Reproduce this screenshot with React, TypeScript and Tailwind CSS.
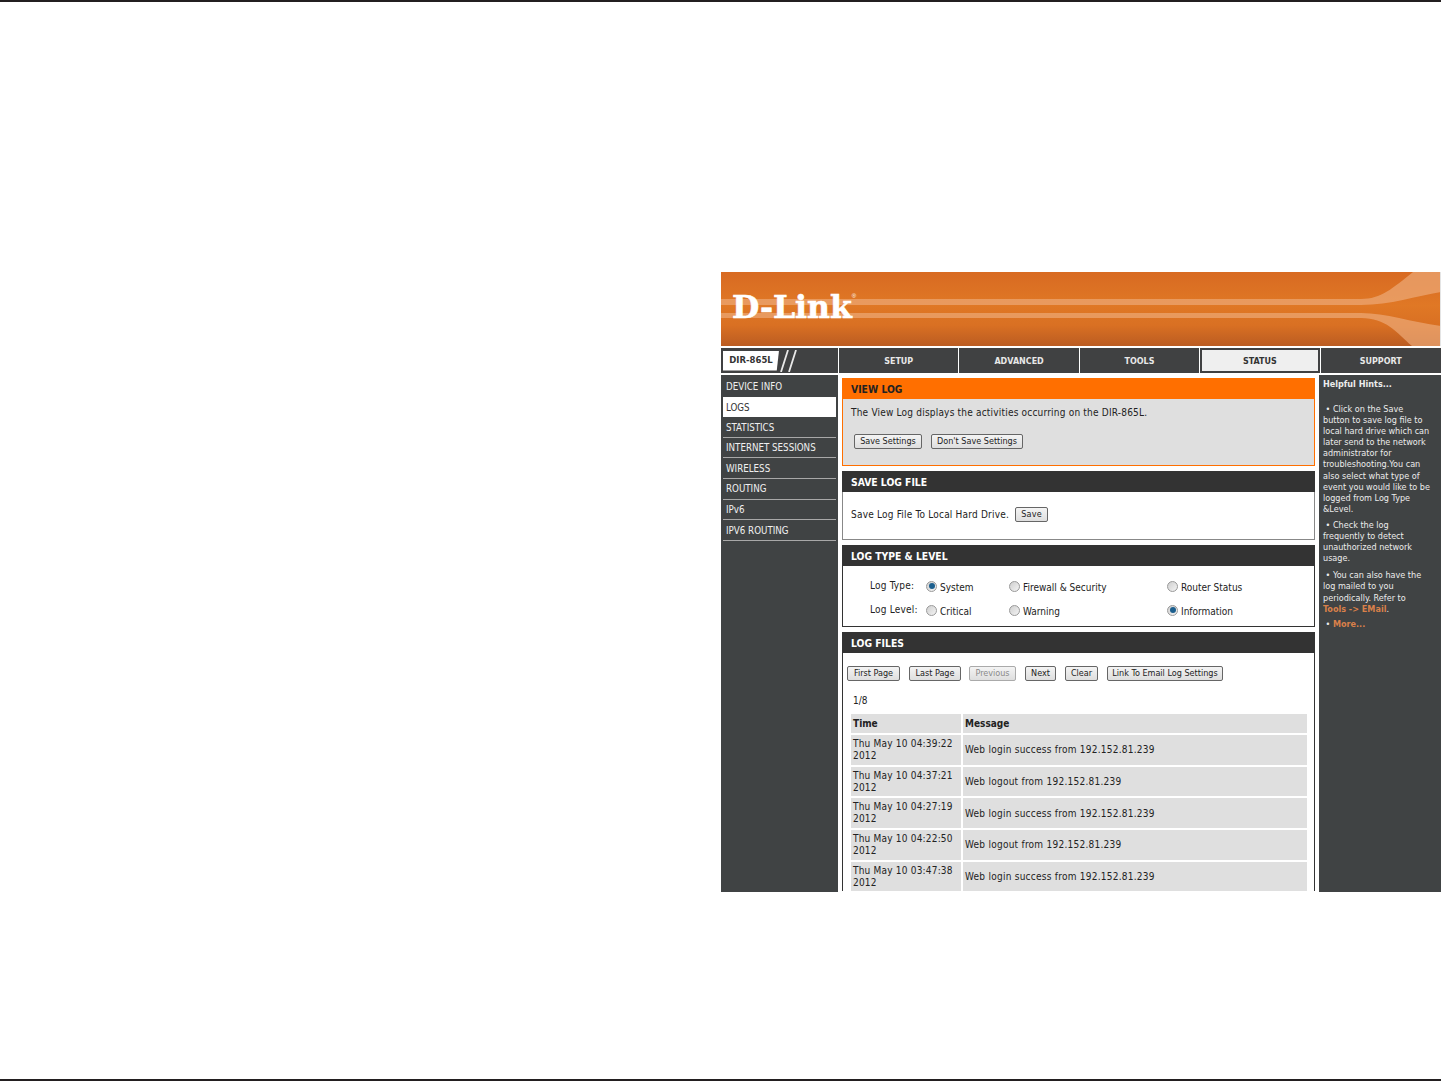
import React from "react";

const font = "[font-family:'DejaVu_Sans_Condensed','DejaVu_Sans',sans-serif]";

const tabs = ["SETUP", "ADVANCED", "TOOLS", "STATUS", "SUPPORT"];
const menu = ["DEVICE INFO", "LOGS", "STATISTICS", "INTERNET SESSIONS", "WIRELESS", "ROUTING", "IPv6", "IPV6 ROUTING"];
const logs = [
  ["Thu May 10 04:39:22 2012", "Web login success from 192.152.81.239"],
  ["Thu May 10 04:37:21 2012", "Web logout from 192.152.81.239"],
  ["Thu May 10 04:27:19 2012", "Web login success from 192.152.81.239"],
  ["Thu May 10 04:22:50 2012", "Web logout from 192.152.81.239"],
  ["Thu May 10 03:47:38 2012", "Web login success from 192.152.81.239"],
];

const Btn = ({ label, w, disabled }: { label: string; w: string; disabled?: boolean }) => (
  <span
    className={`inline-flex h-[15px] items-center justify-center rounded-[2px] border bg-gradient-to-b from-[#f4f4f4] to-[#dedede] text-[9px] leading-none ${w} ${
      disabled ? "border-[#aaaaaa] text-[#8a8a8a]" : "border-[#666666] text-[#222222]"
    }`}
  >
    {label}
  </span>
);

const Radio = ({ on }: { on?: boolean }) => (
  <span className="mb-[2px] flex h-[11px] w-[11px] items-center justify-center rounded-full border border-[#999999] bg-gradient-to-br from-[#cfcfcf] to-[#f4f4f4]">
    {on && <span className="h-[6px] w-[6px] rounded-full bg-[#1c5f8e]" />}
  </span>
);

const Head = ({ title, orange }: { title: string; orange?: boolean }) => (
  <div
    className={`flex h-[21px] items-center px-[9px] pt-[2px] text-[10.3px] font-bold ${
      orange ? "bg-[#ff6f00] text-[#222222]" : "bg-[#333333] text-white"
    }`}
  >
    {title}
  </div>
);

const Option = ({ label, on, w }: { label: string; on?: boolean; w: string }) => (
  <div className={`flex items-center gap-[3px] ${w}`}>
    <Radio on={on} />
    <span>{label}</span>
  </div>
);

const Banner = () => (
  <div className="relative h-[74px] overflow-hidden bg-[#d96d22]">
    <svg className="absolute inset-0" width="720" height="74" viewBox="0 0 720 74">
      <defs>
        <linearGradient id="body" x1="0" y1="0" x2="0" y2="1">
          <stop offset="0" stopColor="#d86a22" />
          <stop offset="0.45" stopColor="#e07825" />
          <stop offset="0.72" stopColor="#d97023" />
          <stop offset="1" stopColor="#bb5c22" />
        </linearGradient>
      </defs>
      <rect width="720" height="74" fill="url(#body)" />
      <path d="M0 27 H640 C660 27 672 16 692 0 H720 V20 C695 24 670 33 640 33 H0 Z" fill="#ecaa78" opacity="0.7" />
      <path d="M0 41 H640 C665 41 690 50 720 54 V74 H691 C675 60 665 46 640 46 H0 Z" fill="#ecaa78" opacity="0.7" />
      <path d="M719.5 0 V74" stroke="#e4e4e4" strokeWidth="1" />
    </svg>
    <div className="absolute left-[11px] top-[15px] flex items-start text-white">
      <span className="text-[31.5px] leading-[40px] font-bold [-webkit-text-stroke:0.6px_white] [font-family:'DejaVu_Serif',serif]">D-Link</span>
      <span className="mt-[6px] text-[6px] leading-none [font-family:'Liberation_Sans',sans-serif]">®</span>
    </div>
  </div>
);

export default function App() {
  return (
    <div className={`flex h-[1081px] w-[1441px] flex-col bg-white ${font}`}>
      <div className="h-[2px] bg-[#231f20]" />
      <div className="ml-[721px] mt-[270px] h-[620px] w-[720px] overflow-hidden">
        <Banner />
        <div className="mt-[2px] flex h-[25px] bg-white text-[8px] font-bold [font-family:'DejaVu_Sans',sans-serif]">
          <div className="flex w-[117px] items-center bg-[#404142] pl-[2px]">
            <div className="flex h-[20px] w-[56px] items-center justify-center bg-white text-[8.5px] text-[#333333] [clip-path:polygon(0_0,100%_0,96%_100%,0_100%)]">
              DIR-865L
            </div>
            <svg width="20" height="22" viewBox="0 0 20 22">
              <path d="M9 0 L2 22 M17 0 L10 22" stroke="#e8e8e8" strokeWidth="1.8" />
            </svg>
          </div>
          {tabs.map((t) => (
            <div
              key={t}
              className={`ml-[1px] flex items-center justify-center pt-[2px] ${t === "SUPPORT" ? "flex-1" : "w-[119.4px]"} ${
                t === "STATUS" ? "bg-[#efefef] text-[#333333] shadow-[inset_0_0_0_2px_#404142]" : "bg-[#404142] text-[#e8e8e8]"
              }`}
            >
              {t}
            </div>
          ))}
        </div>
        <div className="mt-[2px] flex h-[517px]">
          <div className="w-[117px] bg-[#404344] px-[2px] pt-[1px] text-[9.7px] text-[#f0f0f0]">
            {menu.map((m, i) => (
              <div
                key={m}
                className={`flex h-[20.6px] items-center pl-[3px] pt-[2px] ${
                  m === "LOGS" ? "bg-white text-[#333333]" : i > 1 ? "border-b border-[#a8a8a8]" : ""
                }`}
              >
                {m}
              </div>
            ))}
          </div>
          <div className="w-[481px] overflow-hidden px-[4px] pt-[3px] text-[10px] text-[#222222]">
            <Head title="VIEW LOG" orange />
            <div className="h-[67px] border border-t-0 border-[#ff6f00] bg-[#dfdfdf] pl-[8px] pt-[6px] tracking-[0.2px]">
              <div>The View Log displays the activities occurring on the DIR-865L.</div>
              <div className="mt-[14px] flex gap-[9px] pl-[3px] tracking-normal">
                <Btn label="Save Settings" w="w-[68px]" />
                <Btn label="Don't Save Settings" w="w-[92px]" />
              </div>
            </div>
            <div className="mt-[5px]">
              <Head title="SAVE LOG FILE" />
              <div className="flex h-[48px] items-center gap-[6px] border border-t-0 border-[#888888] pb-[2px] pl-[8px] tracking-[0.2px]">
                <span>Save Log File To Local Hard Drive.</span>
                <Btn label="Save" w="w-[33px]" />
              </div>
            </div>
            <div className="mt-[5px]">
              <Head title="LOG TYPE &amp; LEVEL" />
              <div className="flex h-[61px] flex-col gap-[10px] border border-t-0 border-[#333333] pl-[27px] pt-[14px]">
                <div className="flex h-[14px] items-center">
                  <span className="mb-[3px] w-[56px] tracking-[0.2px]">Log Type:</span>
                  <Option label="System" on w="w-[83px]" />
                  <Option label="Firewall & Security" w="w-[158px]" />
                  <Option label="Router Status" w="w-[100px]" />
                </div>
                <div className="flex h-[14px] items-center">
                  <span className="mb-[3px] w-[56px] tracking-[0.2px]">Log Level:</span>
                  <Option label="Critical" w="w-[83px]" />
                  <Option label="Warning" w="w-[158px]" />
                  <Option label="Information" on w="w-[100px]" />
                </div>
              </div>
            </div>
            <div className="mt-[5px]">
              <Head title="LOG FILES" />
              <div className="border-x border-[#333333] bg-white pt-[13px]">
                <div className="flex gap-[9px] pl-[4px]">
                  <Btn label="First Page" w="w-[53px]" />
                  <Btn label="Last Page" w="w-[52px]" />
                  <Btn label="Previous" w="-ml-[1px] w-[47px]" disabled />
                  <Btn label="Next" w="w-[31px]" />
                  <Btn label="Clear" w="w-[33px]" />
                  <Btn label="Link To Email Log Settings" w="w-[116px]" />
                </div>
                <div className="mt-[13px] pl-[10px] leading-[14px]">1/8</div>
                <div className="ml-[8px] mr-[7px] mt-[6px] flex h-[19px] gap-[2px] bg-white font-bold">
                  <div className="flex w-[110px] items-center bg-[#dfdfdf] pl-[2px]">Time</div>
                  <div className="flex flex-1 items-center bg-[#dfdfdf] pl-[2px]">Message</div>
                </div>
                {logs.map(([time, msg]) => (
                  <div key={time} className="ml-[8px] mr-[7px] mt-[2px] flex h-[29.7px] gap-[2px]">
                    <div className="w-[110px] bg-[#dfdfdf] pl-[2px] pt-[3px] leading-[12px] tracking-[0.2px]">{time}</div>
                    <div className="flex flex-1 items-center bg-[#dfdfdf] pl-[2px] tracking-[0.25px]">{msg}</div>
                  </div>
                ))}
              </div>
            </div>
          </div>
          <div className="flex-1 bg-[#404344] pl-[4px] pr-[10px] pt-[3px] text-[9px] leading-[11.1px] text-[#ececec]">
            <div className="font-bold leading-[13px]">Helpful Hints...</div>
            <p className="mt-[13px]">&nbsp;•&nbsp;Click on the Save button to save log file to local hard drive which can later send to the network administrator for troubleshooting.You can also select what type of event you would like to be logged from Log Type &amp;Level.</p>
            <p className="mt-[5px]">&nbsp;•&nbsp;Check the log frequently to detect unauthorized network usage.</p>
            <p className="mt-[6px]">&nbsp;•&nbsp;You can also have the log mailed to you periodically. Refer to</p>
            <p><b className="text-[#d9804a]">Tools -&gt; EMail</b>.</p>
            <p className="mt-[4px]">&nbsp;•&nbsp;<b className="text-[#d9804a]">More...</b></p>
          </div>
        </div>
      </div>
      <div className="mt-auto h-[2px] bg-[#231f20]" />
    </div>
  );
}
